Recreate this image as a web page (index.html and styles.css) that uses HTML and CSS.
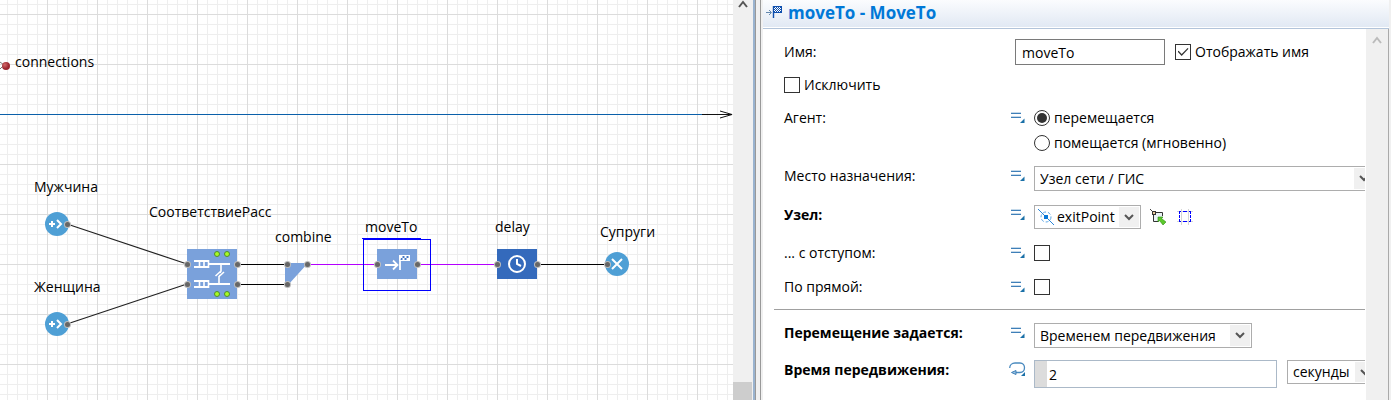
FILE: index.html
```html
<!DOCTYPE html>
<html lang="ru">
<head>
<meta charset="utf-8">
<title>moveTo - MoveTo</title>
<link rel="stylesheet" href="styles.css">
</head>
<body>
<svg class="defs" width="0" height="0" aria-hidden="true">
  <defs>
    <symbol id="chevron" viewBox="0 0 10 7"><path d="M1 1L5 5L9 1" fill="none" stroke="#555" stroke-width="2"/></symbol>
    <symbol id="equals" viewBox="0 0 14 12">
      <path d="M0 .5H10M0 4.500H10" stroke="#c4d9ea"/><path d="M0 1.500H10M0 5.500H10" stroke="#3f7fb8"/>
      <path d="M13.500 6.500V11H9Z" fill="#1a70a8"/>
    </symbol>
  </defs>
</svg>
<main class="app">
  <section class="editor" aria-label="Диаграмма">
    <svg class="canvas">
      <defs>
        <pattern id="grid" x="47" y="14" width="50" height="50" patternUnits="userSpaceOnUse">
          <path d="M10.500 0V50M20.500 0V50M30.500 0V50M40.500 0V50M0 10.500H50M0 20.500H50M0 30.500H50M0 40.500H50" stroke="#eee"/>
          <path d="M.5 0V50M0 .5H50" stroke="#dcdcdc"/>
        </pattern>
        <radialGradient id="ball" cx=".35" cy=".35"><stop offset="0" stop-color="#d26a6a"/><stop offset="1" stop-color="#9c2730"/></radialGradient>
        <g id="port"><circle r="3.500" fill="#bdbdbd"/><circle r="2.500" fill="#666"/></g>
        <g id="lamp"><circle r="2.500" fill="#a8fb23" stroke="#4f8a35"/></g>
        <g id="source"><circle r="12" fill="#4e9fd5"/><path d="M-8 0H-2M-5 -3V3" stroke="#fff" stroke-width="2"/><path d="M0 -4L4 0L0 4" fill="none" stroke="#fff" stroke-width="2"/></g>
        <g id="queue" fill="none" stroke="#fff"><path d="M0 1H15M0 7H15" stroke-width="2"/><path d="M5.500 1V7M10 1V7M14.500 0V8" stroke-width="1.600"/><path d="M15 4H36" stroke-width="2"/></g>
      </defs>
      <rect width="100%" height="100%" fill="url(#grid)"/>

      <path d="M0 62L4 65L0 69" fill="none" stroke="#777"/>
      <circle cx="6" cy="66" r="4" fill="url(#ball)"/>
      <text x="15" y="67">connections</text>

      <path d="M0 114.500H702" stroke="#0b60aa"/>
      <path d="M702 114.500H732M720 111L732 114.500L720 118" fill="none" stroke="#111"/>

      <path d="M67 224L187 264M67 324L187 284" stroke="#222" stroke-width="1.200"/>
      <path d="M237 264.500H287M237 284.500H287M537 264.500H607" stroke="#000"/>
      <path d="M307 264.500H377M417 264.500H497" stroke="#b400ff"/>

      <text x="34" y="192">Мужчина</text>
      <use href="#source" x="57" y="224"/>
      <text x="34" y="292">Женщина</text>
      <use href="#source" x="57" y="324"/>

      <text x="149" y="217">СоответствиеРасс</text>
      <rect x="187" y="249" width="50" height="50" fill="#7aa1db"/>
      <use href="#queue" x="194" y="260"/><use href="#queue" x="194" y="280"/>
      <path d="M221 264V271L220 273M219 284V277L220 275M215.500 276L221 271M218.500 277L224 272" fill="none" stroke="#fff" stroke-width="1.600"/>
      <use href="#lamp" x="217" y="254"/><use href="#lamp" x="227" y="254"/>
      <use href="#lamp" x="217" y="294"/><use href="#lamp" x="227" y="294"/>

      <text x="275" y="242">combine</text>
      <path d="M285 263H308L288 285H285Z" fill="#7aa1db"/>

      <text x="365" y="232">moveTo</text>
      <path d="M362 238.500H421" stroke="#00f"/>
      <rect x="363.500" y="239.500" width="67" height="51" fill="none" stroke="#00f"/>
      <rect x="377" y="249" width="40" height="30" fill="#7aa1db"/>
      <path d="M385 265H397M393 260.500L397.500 265L393 269.500M400 270V256" fill="none" stroke="#fff" stroke-width="1.800"/>
      <path d="M399 255H410V261H399Z" fill="#fff"/>
      <path d="M401 258h1.500v-2h2v2h2v-2h2v2h-2v2h-2v-2h-2v2h-2z" fill="#4678c4"/>

      <text x="495" y="232">delay</text>
      <rect x="497" y="249" width="40" height="30" fill="#346abc"/>
      <circle cx="517" cy="264" r="8" fill="none" stroke="#fff" stroke-width="2"/>
      <path d="M517 259V264L521 266" fill="none" stroke="#fff" stroke-width="2"/>

      <text x="600" y="237">Супруги</text>
      <circle cx="617" cy="264" r="12" fill="#4e9fd5"/>
      <path d="M612 259L622 269M622 259L612 269" stroke="#fff" stroke-width="2"/>

      <use href="#port" x="67.500" y="224.500"/><use href="#port" x="67.500" y="324.500"/>
      <use href="#port" x="187.500" y="264.500"/><use href="#port" x="187.500" y="284.500"/>
      <use href="#port" x="237.500" y="264.500"/><use href="#port" x="237.500" y="284.500"/>
      <use href="#port" x="287.500" y="264.500"/><use href="#port" x="287.500" y="284.500"/><use href="#port" x="307.500" y="264.500"/>
      <use href="#port" x="377.500" y="264.500"/><use href="#port" x="417.500" y="264.500"/>
      <use href="#port" x="497.500" y="264.500"/><use href="#port" x="537.500" y="264.500"/><use href="#port" x="607.500" y="264.500"/>
    </svg>
    <div class="scroll">
      <svg class="up" viewBox="0 0 10 8"><path d="M1 7L5 2L9 7" fill="none" stroke="#555" stroke-width="2"/></svg>
      <div class="thumb"></div>
    </div>
  </section>
  <div class="sash"></div>
  <section class="panel">
    <header class="head">
      <svg class="flag" viewBox="0 0 17 14">
        <path d="M0 7.500H5M3 5L5.500 7.500L3 10" fill="none" stroke="#6388ae"/>
        <path d="M7.500 1V13" stroke="#0e4fae" stroke-width="1.400"/><path d="M7 1H16V8H7Z" fill="#0e4fae"/>
        <path d="M9 2.500H15M9 4.500H15M9 6.500H15" stroke="#fff" stroke-dasharray="1 1"/><path d="M8 3.500H15M8 5.500H15" stroke="#fff" stroke-dasharray="1 1"/>
      </svg>
      <h1>moveTo - MoveTo</h1>
    </header>
    <div class="body">
      <form class="form">
        <div class="name-row">
          <label for="name">Имя:</label>
          <input class="text" id="name" type="text" value="moveTo">
          <label class="option"><input type="checkbox" checked>Отображать имя</label>
        </div>
        <label class="option exclude"><input type="checkbox">Исключить</label>
        <div class="row agent" role="radiogroup" aria-labelledby="agent">
          <span id="agent">Агент:</span>
          <svg class="eq"><use href="#equals"/></svg>
          <div class="radios">
            <label class="option"><input type="radio" name="agent" checked>перемещается</label>
            <label class="option"><input type="radio" name="agent">помещается (мгновенно)</label>
          </div>
        </div>
        <div class="row top dest">
          <label for="dest">Место назначения:</label>
          <svg class="eq"><use href="#equals"/></svg>
          <div class="select wide"><select id="dest"><option>Узел сети / ГИС</option></select><span class="drop"><svg><use href="#chevron"/></svg></span></div>
        </div>
        <div class="row top node">
          <label class="strong" for="node">Узел:</label>
          <svg class="eq"><use href="#equals"/></svg>
          <div class="group">
            <div class="select point"><svg class="pin" viewBox="0 0 16 16"><path d="M0 0L16 16" stroke="#2b86d8"/><circle cx="8" cy="8" r="5" fill="none" stroke="#5aa6e6" stroke-dasharray="3 2"/><rect x="6" y="6" width="4" height="4" fill="#0878d8"/></svg><select id="node"><option>exitPoint</option></select><span class="drop"><svg><use href="#chevron"/></svg></span></div>
            <button type="button" aria-label="Выбрать на диаграмме"><svg viewBox="0 0 16 16"><path d="M3.500 3.500H12.500V12.500H3.500Z" fill="#e9f3f5"/><path d="M3.500 12.500V3.500H12.500V7M3.500 12.500H8" fill="none" stroke="#333"/><path d="M0 0L3 3" stroke="#444"/><rect x="2.500" y="2.500" width="3" height="3" fill="#e9c99c" stroke="#333"/><path d="M8 8H13L11.500 9.500L16 13L13 16L9.500 11.500L8 13Z" fill="#5cc92b" stroke="#318b18" stroke-width=".6"/></svg></button>
            <button type="button" aria-label="Показать на диаграмме"><svg viewBox="0 0 16 16"><path d="M0 2.500H16M0 12.500H16M4.500 0V16M11.500 0V16" stroke="#d5d5d5"/><path d="M2 2.500H4M6 2.500H10M12 2.500H14M2 12.500H4M6 12.500H10M12 12.500H14M2.500 3V5M2.500 6V9M2.500 10V12M13.500 3V5M13.500 6V9M13.500 10V12" stroke="#00f"/></svg></button>
          </div>
        </div>
        <div class="row offset">
          <label for="offset">... с отступом:</label>
          <svg class="eq"><use href="#equals"/></svg>
          <input id="offset" type="checkbox">
        </div>
        <div class="row straight">
          <label for="straight">По прямой:</label>
          <svg class="eq"><use href="#equals"/></svg>
          <input id="straight" type="checkbox">
        </div>
        <hr>
        <div class="row top mode">
          <label class="strong" for="mode">Перемещение задается:</label>
          <svg class="eq"><use href="#equals"/></svg>
          <div class="select medium"><select id="mode"><option>Временем передвижения</option></select><span class="drop"><svg><use href="#chevron"/></svg></span></div>
        </div>
        <div class="row top time">
          <label class="strong" for="time">Время передвижения:</label>
          <svg class="loop" viewBox="0 0 17 15"><path d="M.7 6C.7 3 3 1 6 1H11C17 1 17 10.500 11 10.500H7" fill="none" stroke="#4a8abf" stroke-width="1.300"/><path d="M2.500 10.500L7 8.500V12.500Z" fill="#9cc4e2" stroke="#3f7fb8"/><path d="M16 10V14H12Z" fill="#1a70a8"/></svg>
          <div class="group">
            <input class="text amount" id="time" type="text" value="2">
            <div class="select unit"><select aria-label="Единица времени"><option>секунды</option></select><span class="drop"><svg><use href="#chevron"/></svg></span></div>
          </div>
        </div>
      </form>
      <div class="scroll panel-scroll"><svg class="up" viewBox="0 0 10 8"><path d="M1 7L5 2L9 7" fill="none" stroke="#bbb" stroke-width="2"/></svg></div>
    </div>
  </section>
</main>
</body>
</html>
```
FILE: styles.css
```css
* { box-sizing: border-box; }
body { margin: 0; background: #f0f0f0; color: #000; font: 14px/20px "Open Sans", "Noto Sans", sans-serif; }
.defs { position: absolute; }
.app { display: grid; grid-template-columns: minmax(0, 753fr) 10px minmax(0, 628fr); height: 100vh; min-height: 400px; }

.editor { display: grid; grid-template-columns: minmax(0, 1fr) 20px; background: #fff; overflow: hidden; }
.canvas { width: 100%; height: 100%; }
.canvas text { font-size: 14px; }
.scroll { display: flex; flex-direction: column; justify-content: space-between; background: #f0f0f0; }
.scroll .up { width: 10px; height: 8px; align-self: center; }
.thumb { height: 18px; margin-right: 1px; background: #cdcdcd; }
.sash { background: #f0f0f0; border-left: 2px solid #9ab3cf; box-shadow: inset 1px 0 #999, inset -2px 0 #f0f0f0, inset -3px 0 #999; }

.panel { display: flex; flex-direction: column; background: #fff; border-right: 2px solid #f0f0f0; overflow: hidden; }
.head { display: flex; gap: 5px; height: 29px; padding: 2px 3px; background: linear-gradient(#fbfcfe, #e0e8f3); border-bottom: 1px solid #b2c4da; box-shadow: inset 0 -1px #fff; }
.flag { width: 17px; height: 14px; margin-top: 3px; flex: none; }
h1 { margin: 0; font-size: 17px; line-height: 22px; color: #0078d7; }
.body { flex: 1; display: grid; grid-template-columns: minmax(0, 1fr) 24px; }
.form { padding: 10px 0 12px 21px; overflow: hidden; }
.panel-scroll { padding-top: 7px; border-left: 1px solid #fff; border-right: 1px solid #aaa; }

.name-row { display: grid; grid-template-columns: 231px 150px auto; align-items: center; }
.name-row .option { margin-left: 10px; }
.row { display: grid; grid-template-columns: 226px 24px auto; align-items: center; justify-content: start; }
.row.top { align-items: start; }
.top .eq { margin-top: 4px; }
.option { display: flex; align-items: center; gap: 4px; }
.exclude { margin-top: 10px; }
.agent { margin-top: 13px; align-items: start; }
.agent .eq { margin-top: 4px; }
.radios { display: grid; gap: 5px; }
.dest { margin-top: 13px; }
.node { margin-top: 14px; }
.offset { margin-top: 14px; }
.straight { margin-top: 14px; }
.mode { margin-top: 13px; }
.time { margin-top: 12px; }
.strong { font-weight: 700; }
.eq { width: 14px; height: 12px; margin-left: 1px; }
.loop { width: 17px; height: 15px; margin-top: 2px; margin-left: -1px; }
hr { height: 1px; margin: 12px 0 0 -10px; border: 0; background: #a0a0a0; }
.group { display: flex; align-items: start; }

input, select, button { font: inherit; color: inherit; margin: 0; }
.text { width: 100%; height: 26px; padding: 0 6px; background: #fff; border: 1px solid #7a7a7a; border-radius: 0; }
.amount { width: 243px; height: 28px; margin-right: 10px; padding-left: 14px; border-color: #abb9c8; box-shadow: inset 12px 0 #dcdcdc; }
input[type="checkbox"], input[type="radio"] { appearance: none; display: grid; place-items: center; width: 16px; height: 16px; background: #fff; border: 1px solid #333; flex: none; }
input[type="radio"] { border-radius: 50%; }
input[type="radio"]:checked::before { content: ""; width: 10px; height: 10px; border-radius: 50%; background: #333; }
input[type="checkbox"]:checked::before { content: ""; width: 11px; height: 8px; background: #333; clip-path: polygon(0 45%, 10% 35%, 38% 75%, 92% 0, 100% 10%, 38% 100%); }
.select { position: relative; height: 25px; }
.select select { appearance: none; width: 100%; height: 100%; padding: 0 24px 0 5px; background: #fff; border: 1px solid #adadad; border-radius: 0; }
.drop { position: absolute; top: 2px; right: 2px; bottom: 2px; width: 20px; display: grid; place-items: center; background: #f0f0f0; pointer-events: none; }
.drop svg { width: 10px; height: 7px; }
.wide { width: 342px; }
.medium { width: 218px; }
.unit { width: 90px; height: 24px; }
.point { width: 107px; height: 24px; }
.point select { padding-left: 22px; }
.pin { position: absolute; left: 4px; top: 4px; width: 16px; height: 16px; pointer-events: none; }
button { display: grid; padding: 0; margin: 4px 0 0 9px; border: 0; background: none; }
button + button { margin-left: 11px; }
button svg { width: 16px; height: 16px; }
```
